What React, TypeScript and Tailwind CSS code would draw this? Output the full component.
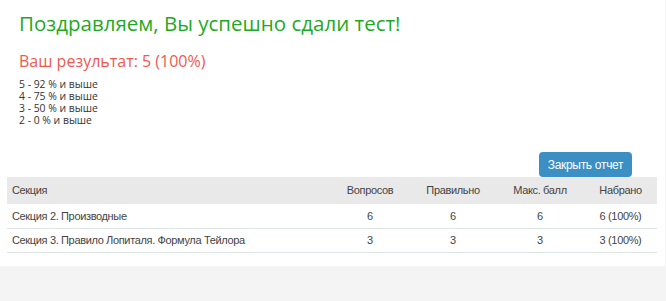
import React from "react";

const grades = ["5 - 92 % и выше", "4 - 75 % и выше", "3 - 50 % и выше", "2 - 0 % и выше"];

const rows = [
  { name: "Секция 2. Производные", total: 6, right: 6, max: 6, got: "6 (100%)" },
  { name: "Секция 3. Правило Лопиталя. Формула Тейлора", total: 3, right: 3, max: 3, got: "3 (100%)" },
];

export default function App() {
  return (
    <div className="w-[666px] h-[301px] bg-[#f4f4f4] font-['Liberation_Sans',sans-serif]">
      <div className="w-[665px] bg-white pb-[13px]">
        <div className="pl-[19px] pt-[9px] font-['Open_Sans',sans-serif]">
          <h1 className="text-[20.5px] leading-[28px] text-[#1fa91f]">Поздравляем, Вы успешно сдали тест!</h1>
          <h2 className="mt-[13px] text-[16px] leading-[22px] text-[#ee5a50]">Ваш результат: 5 (100%)</h2>
          <div className="mt-[6px] text-[10.4px] leading-[12px] text-[#333]">
            {grades.map((g) => (
              <div key={g}>{g}</div>
            ))}
          </div>
        </div>

        <div className="ml-[7px] w-[650px] mt-[26px]">
          <div className="flex justify-end pr-[25px]">
            <button className="w-[93px] h-[25px] rounded-[4px] bg-[#3b8fc3] text-white text-[12px] tracking-[-0.3px]">
              Закрыть отчет
            </button>
          </div>
          <table className="w-full text-[11px] tracking-[-0.35px] text-[#444] border-collapse">
            <thead>
              <tr className="bg-[#e9e9e9] h-[27px]">
                <th className="w-[323px] text-left font-normal pl-[5px]">Секция</th>
                <th className="w-[80px] font-normal">Вопросов</th>
                <th className="w-[86px] font-normal">Правильно</th>
                <th className="w-[88px] font-normal">Макс. балл</th>
                <th className="font-normal">Набрано</th>
              </tr>
            </thead>
            <tbody>
              {rows.map((r) => (
                <tr key={r.name} className="h-[24px] border-b border-[#dde4e4]">
                  <td className="pl-[5px]">{r.name}</td>
                  <td className="text-center">{r.total}</td>
                  <td className="text-center">{r.right}</td>
                  <td className="text-center">{r.max}</td>
                  <td className="text-center">{r.got}</td>
                </tr>
              ))}
            </tbody>
          </table>
        </div>
      </div>
    </div>
  );
}
